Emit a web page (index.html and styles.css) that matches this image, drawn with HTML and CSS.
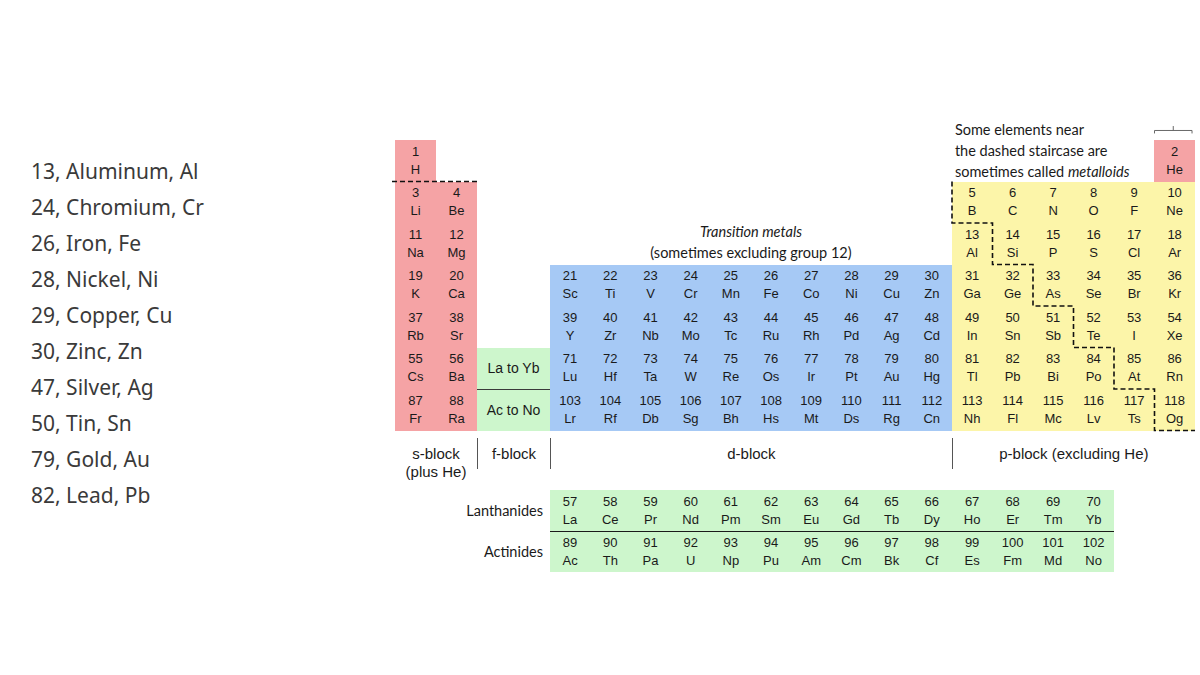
FILE: index.html
```html
<!DOCTYPE html>
<html lang="en">
<head>
<meta charset="utf-8">
<title>Periodic table</title>
<link rel="stylesheet" href="styles.css">
</head>
<body>
<div class="page">
  <ul class="list">
    <li>13, Aluminum, Al</li>
    <li>24, Chromium, Cr</li>
    <li>26, Iron, Fe</li>
    <li>28, Nickel, Ni</li>
    <li>29, Copper, Cu</li>
    <li>30, Zinc, Zn</li>
    <li>47, Silver, Ag</li>
    <li>50, Tin, Sn</li>
    <li>79, Gold, Au</li>
    <li>82, Lead, Pb</li>
  </ul>

  <div class="table">
    <!-- header row -->
    <div class="gap13"></div>
    <div class="note">Some elements near<br>the dashed staircase are<br>sometimes called <i>metalloids</i></div>
    <div class="bracket"><svg width="41" height="22" viewBox="0 0 41 22"><path d="M0.5 15.5 V12.5 H38.5 V15.5 M19.5 12.5 V8" fill="none" stroke="#666" stroke-width="1"/></svg></div>

    <!-- period 1 -->
    <div class="el s"><span>1</span><span>H</span></div>
    <div class="gap12"></div>
    <div class="el s"><span>2</span><span>He</span></div>

    <!-- period 2 -->
    <div class="el s"><span>3</span><span>Li</span></div>
    <div class="el s"><span>4</span><span>Be</span></div>
    <div class="gap1"></div>
    <div class="tm"><i>Transition metals</i><br>(sometimes excluding group 12)</div>
    <div class="el p"><span>5</span><span>B</span></div>
    <div class="el p"><span>6</span><span>C</span></div>
    <div class="el p"><span>7</span><span>N</span></div>
    <div class="el p"><span>8</span><span>O</span></div>
    <div class="el p"><span>9</span><span>F</span></div>
    <div class="el p"><span>10</span><span>Ne</span></div>

    <!-- period 3 -->
    <div class="el s"><span>11</span><span>Na</span></div>
    <div class="el s"><span>12</span><span>Mg</span></div>
    <div class="gap1"></div>
    <div class="el p"><span>13</span><span>Al</span></div>
    <div class="el p"><span>14</span><span>Si</span></div>
    <div class="el p"><span>15</span><span>P</span></div>
    <div class="el p"><span>16</span><span>S</span></div>
    <div class="el p"><span>17</span><span>Cl</span></div>
    <div class="el p"><span>18</span><span>Ar</span></div>

    <!-- period 4 -->
    <div class="el s"><span>19</span><span>K</span></div>
    <div class="el s"><span>20</span><span>Ca</span></div>
    <div class="gap1"></div>
    <div class="el d"><span>21</span><span>Sc</span></div>
    <div class="el d"><span>22</span><span>Ti</span></div>
    <div class="el d"><span>23</span><span>V</span></div>
    <div class="el d"><span>24</span><span>Cr</span></div>
    <div class="el d"><span>25</span><span>Mn</span></div>
    <div class="el d"><span>26</span><span>Fe</span></div>
    <div class="el d"><span>27</span><span>Co</span></div>
    <div class="el d"><span>28</span><span>Ni</span></div>
    <div class="el d"><span>29</span><span>Cu</span></div>
    <div class="el d"><span>30</span><span>Zn</span></div>
    <div class="el p"><span>31</span><span>Ga</span></div>
    <div class="el p"><span>32</span><span>Ge</span></div>
    <div class="el p"><span>33</span><span>As</span></div>
    <div class="el p"><span>34</span><span>Se</span></div>
    <div class="el p"><span>35</span><span>Br</span></div>
    <div class="el p"><span>36</span><span>Kr</span></div>

    <!-- period 5 -->
    <div class="el s"><span>37</span><span>Rb</span></div>
    <div class="el s"><span>38</span><span>Sr</span></div>
    <div class="gap1"></div>
    <div class="el d"><span>39</span><span>Y</span></div>
    <div class="el d"><span>40</span><span>Zr</span></div>
    <div class="el d"><span>41</span><span>Nb</span></div>
    <div class="el d"><span>42</span><span>Mo</span></div>
    <div class="el d"><span>43</span><span>Tc</span></div>
    <div class="el d"><span>44</span><span>Ru</span></div>
    <div class="el d"><span>45</span><span>Rh</span></div>
    <div class="el d"><span>46</span><span>Pd</span></div>
    <div class="el d"><span>47</span><span>Ag</span></div>
    <div class="el d"><span>48</span><span>Cd</span></div>
    <div class="el p"><span>49</span><span>In</span></div>
    <div class="el p"><span>50</span><span>Sn</span></div>
    <div class="el p"><span>51</span><span>Sb</span></div>
    <div class="el p"><span>52</span><span>Te</span></div>
    <div class="el p"><span>53</span><span>I</span></div>
    <div class="el p"><span>54</span><span>Xe</span></div>

    <!-- period 6 -->
    <div class="el s"><span>55</span><span>Cs</span></div>
    <div class="el s"><span>56</span><span>Ba</span></div>
    <div class="frange">La to Yb</div>
    <div class="el d"><span>71</span><span>Lu</span></div>
    <div class="el d"><span>72</span><span>Hf</span></div>
    <div class="el d"><span>73</span><span>Ta</span></div>
    <div class="el d"><span>74</span><span>W</span></div>
    <div class="el d"><span>75</span><span>Re</span></div>
    <div class="el d"><span>76</span><span>Os</span></div>
    <div class="el d"><span>77</span><span>Ir</span></div>
    <div class="el d"><span>78</span><span>Pt</span></div>
    <div class="el d"><span>79</span><span>Au</span></div>
    <div class="el d"><span>80</span><span>Hg</span></div>
    <div class="el p"><span>81</span><span>Tl</span></div>
    <div class="el p"><span>82</span><span>Pb</span></div>
    <div class="el p"><span>83</span><span>Bi</span></div>
    <div class="el p"><span>84</span><span>Po</span></div>
    <div class="el p"><span>85</span><span>At</span></div>
    <div class="el p"><span>86</span><span>Rn</span></div>

    <!-- period 7 -->
    <div class="el s"><span>87</span><span>Fr</span></div>
    <div class="el s"><span>88</span><span>Ra</span></div>
    <div class="frange lower">Ac to No</div>
    <div class="el d"><span>103</span><span>Lr</span></div>
    <div class="el d"><span>104</span><span>Rf</span></div>
    <div class="el d"><span>105</span><span>Db</span></div>
    <div class="el d"><span>106</span><span>Sg</span></div>
    <div class="el d"><span>107</span><span>Bh</span></div>
    <div class="el d"><span>108</span><span>Hs</span></div>
    <div class="el d"><span>109</span><span>Mt</span></div>
    <div class="el d"><span>110</span><span>Ds</span></div>
    <div class="el d"><span>111</span><span>Rg</span></div>
    <div class="el d"><span>112</span><span>Cn</span></div>
    <div class="el p"><span>113</span><span>Nh</span></div>
    <div class="el p"><span>114</span><span>Fl</span></div>
    <div class="el p"><span>115</span><span>Mc</span></div>
    <div class="el p"><span>116</span><span>Lv</span></div>
    <div class="el p"><span>117</span><span>Ts</span></div>
    <div class="el p"><span>118</span><span>Og</span></div>

    <!-- block labels -->
    <div class="blabel span2">s-block<br>(plus He)</div>
    <div class="blabel sep">f-block</div>
    <div class="blabel sep span10">d-block</div>
    <div class="blabel sep span6">p-block (excluding He)</div>

    <!-- lanthanides -->
    <div class="llabel">Lanthanides</div>
    <div class="el f"><span>57</span><span>La</span></div>
    <div class="el f"><span>58</span><span>Ce</span></div>
    <div class="el f"><span>59</span><span>Pr</span></div>
    <div class="el f"><span>60</span><span>Nd</span></div>
    <div class="el f"><span>61</span><span>Pm</span></div>
    <div class="el f"><span>62</span><span>Sm</span></div>
    <div class="el f"><span>63</span><span>Eu</span></div>
    <div class="el f"><span>64</span><span>Gd</span></div>
    <div class="el f"><span>65</span><span>Tb</span></div>
    <div class="el f"><span>66</span><span>Dy</span></div>
    <div class="el f"><span>67</span><span>Ho</span></div>
    <div class="el f"><span>68</span><span>Er</span></div>
    <div class="el f"><span>69</span><span>Tm</span></div>
    <div class="el f"><span>70</span><span>Yb</span></div>

    <!-- actinides -->
    <div class="llabel">Actinides</div>
    <div class="el f act"><span>89</span><span>Ac</span></div>
    <div class="el f act"><span>90</span><span>Th</span></div>
    <div class="el f act"><span>91</span><span>Pa</span></div>
    <div class="el f act"><span>92</span><span>U</span></div>
    <div class="el f act"><span>93</span><span>Np</span></div>
    <div class="el f act"><span>94</span><span>Pu</span></div>
    <div class="el f act"><span>95</span><span>Am</span></div>
    <div class="el f act"><span>96</span><span>Cm</span></div>
    <div class="el f act"><span>97</span><span>Bk</span></div>
    <div class="el f act"><span>98</span><span>Cf</span></div>
    <div class="el f act"><span>99</span><span>Es</span></div>
    <div class="el f act"><span>100</span><span>Fm</span></div>
    <div class="el f act"><span>101</span><span>Md</span></div>
    <div class="el f act"><span>102</span><span>No</span></div>

    <svg class="dash" width="800" height="320" viewBox="0 0 800 320">
      <path d="M-3 63.5 H82" />
      <path d="M557 63.5 V105 H597.5 V146.5 H638 V188 H678.5 V229.5 H719 V271 H759.5 V312.5 H800" />
    </svg>
  </div>
</div>
</body>
</html>
```

FILE: styles.css
```css
body {
  margin: 0;
  background: #ffffff;
  font-family: "Liberation Sans", Arial, sans-serif;
}

.page {
  display: flex;
  align-items: flex-start;
  padding-top: 118px;
}

.list {
  list-style: none;
  margin: 35px 0 0;
  padding: 0 0 0 31px;
  width: 395px;
  box-sizing: border-box;
  font-family: "Noto Sans", "Open Sans", sans-serif;
  font-size: 21px;
  line-height: 36px;
  color: #3a3a3a;
}

.table {
  position: relative;
  display: grid;
  grid-template-columns: 41px 41px 73px repeat(10, 40.2px) repeat(6, 40.5px);
  grid-template-rows: 22px repeat(7, 41.5px) 59.5px 41px 41px;
}

.gap1 { grid-column: span 1; }
.gap12 { grid-column: span 12; }
.gap13 { grid-column: span 13; }
.span2 { grid-column: span 2; }
.span6 { grid-column: span 6; }
.span10 { grid-column: span 10; }

.el {
  display: flex;
  flex-direction: column;
  align-items: center;
  justify-content: center;
  font-size: 13px;
  line-height: 18px;
  color: #1a1a1a;
}

.s { background: #f5a3a5; }
.d { background: #a6c9f5; }
.p { background: #fcf5a9; }
.f { background: #cdf6cc; }

.act { border-top: 1.5px solid #1a1a1a; }

.note {
  grid-column: span 5;
  grid-row: span 2;
  align-self: end;
  padding-left: 3px;
  font-family: Lato, "Open Sans", sans-serif;
  font-size: 14.5px;
  line-height: 21px;
  color: #1a1a1a;
  white-space: nowrap;
}

.bracket {
  display: flex;
}

.tm {
  grid-column: span 10;
  grid-row: span 2;
  align-self: end;
  padding-bottom: 2px;
  text-align: center;
  font-family: Lato, "Open Sans", sans-serif;
  font-size: 14.5px;
  line-height: 21px;
  color: #1a1a1a;
}

.frange {
  display: flex;
  align-items: center;
  justify-content: center;
  background: #cdf6cc;
  font-size: 14px;
  color: #1a1a1a;
}

.frange.lower {
  border-top: 1px solid #3a3a3a;
}

.blabel {
  align-self: start;
  margin-top: 7px;
  height: 31px;
  box-sizing: border-box;
  padding-top: 7px;
  text-align: center;
  font-size: 15px;
  line-height: 18px;
  color: #1a1a1a;
}

.blabel.sep {
  border-left: 1px solid #555;
}

.llabel {
  grid-column: span 3;
  display: flex;
  align-items: center;
  justify-content: flex-end;
  padding-right: 7px;
  font-family: Lato, "Open Sans", sans-serif;
  font-size: 14.5px;
  color: #1a1a1a;
}

.dash {
  position: absolute;
  left: 0;
  top: 0;
  overflow: visible;
  pointer-events: none;
}

.dash path {
  fill: none;
  stroke: #111;
  stroke-width: 1.6;
  stroke-dasharray: 5 3;
}
```
